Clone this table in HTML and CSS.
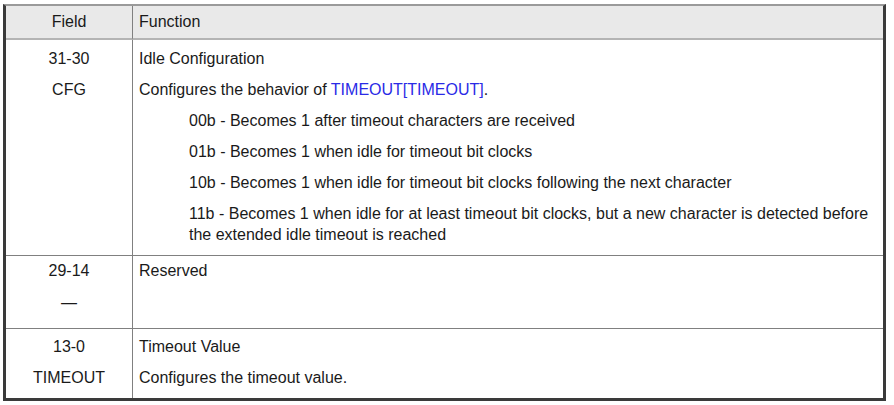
FILE: index.html
```html
<!DOCTYPE html>
<html>
<head>
<meta charset="utf-8">
<link rel="stylesheet" href="styles.css">
</head>
<body>
<table class="reg">
  <thead>
    <tr>
      <th class="field">Field</th>
      <th class="func">Function</th>
    </tr>
  </thead>
  <tbody>
    <tr class="row1">
      <td class="field">
        <p>31-30</p>
        <p>CFG</p>
      </td>
      <td class="func">
        <p>Idle Configuration</p>
        <p>Configures the behavior of <span class="link">TIMEOUT[TIMEOUT]</span>.</p>
        <p class="opt">00b - Becomes 1 after timeout characters are received</p>
        <p class="opt">01b - Becomes 1 when idle for timeout bit clocks</p>
        <p class="opt">10b - Becomes 1 when idle for timeout bit clocks following the next character</p>
        <p class="opt">11b - Becomes 1 when idle for at least timeout bit clocks, but a new character is detected before the extended idle timeout is reached</p>
      </td>
    </tr>
    <tr class="row2">
      <td class="field">
        <p>29-14</p>
        <p class="dash">—</p>
      </td>
      <td class="func">
        <p>Reserved</p>
      </td>
    </tr>
    <tr class="row3">
      <td class="field">
        <p>13-0</p>
        <p>TIMEOUT</p>
      </td>
      <td class="func">
        <p>Timeout Value</p>
        <p>Configures the timeout value.</p>
      </td>
    </tr>
  </tbody>
</table>
</body>
</html>
```
FILE: styles.css
```css
html, body {
  margin: 0;
  padding: 0;
  background: #ffffff;
}
body {
  padding: 4px 8px 4px 3px;
  font-family: "Liberation Sans", Arial, sans-serif;
  font-size: 16px;
  color: #1a1a1a;
}
.reg {
  width: 883px;
  border-collapse: separate;
  border-spacing: 0;
  border-top: 2px solid #9a9a9a;
  border-left: 3px solid #3a3a3a;
  border-right: 3px solid #3a3a3a;
  border-bottom: 3px solid #3a3a3a;
}
.reg th {
  background: #e9e9e9;
  font-weight: normal;
  height: 30px;
  padding: 0 0 2px 0;
  border-bottom: 2px solid #b4b4b4;
  line-height: 21px;
  vertical-align: middle;
}
.reg th.field {
  text-align: center;
}
.reg th.func {
  text-align: left;
  padding-left: 6px;
}
.reg td {
  vertical-align: top;
  padding: 0;
}
.reg .field {
  width: 126px;
  border-right: 1px solid #808080;
  text-align: center;
}
.reg td.func {
  padding-left: 6px;
  padding-right: 8px;
}
.reg p {
  margin: 0 0 10px 0;
  line-height: 21px;
}
.reg p:last-child {
  margin-bottom: 0;
}
.reg p.opt {
  padding-left: 50px;
}
.reg p.dash {
  margin-top: 11px;
}
.link {
  color: #2a2ae6;
}
.row1 td {
  padding-top: 8px;
  padding-bottom: 10px;
  border-bottom: 1px solid #808080;
}
.row2 td {
  height: 73px;
  box-sizing: border-box;
  padding-top: 4px;
  border-bottom: 1px solid #808080;
}
.row3 td {
  padding-top: 7px;
  height: 69px;
  box-sizing: border-box;
}
```
